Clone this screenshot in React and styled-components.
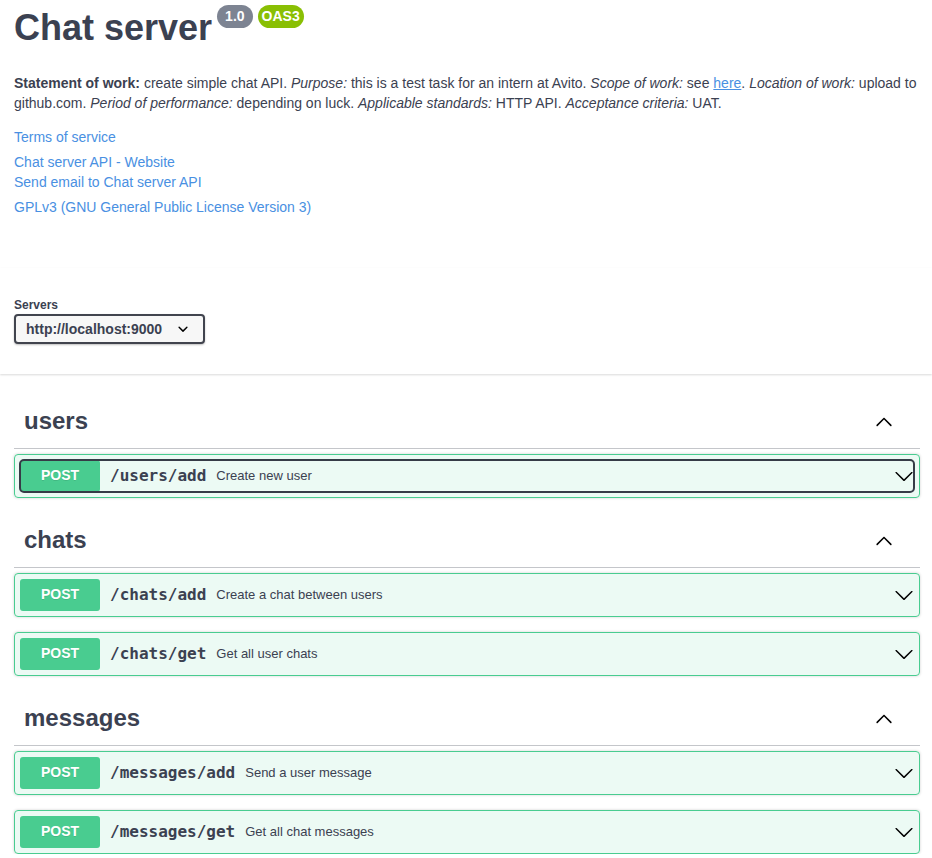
import React from 'react';
import styled, { createGlobalStyle } from 'styled-components';

const GlobalStyle = createGlobalStyle`
	html, body {
		margin: 0;
		padding: 0;
		background: #fff;
	}
	body {
		font-family: "Liberation Sans", Arial, sans-serif;
		color: #3b4151;
	}
`;

const Page = styled.div`
	display: flex;
	flex-direction: column;
`;

const Wrapper = styled.div`
	padding: 0 12px 0 14px;
`;

const Info = styled(Wrapper)`
	padding-top: 4px;
	margin-bottom: 51px;
`;

const TitleRow = styled.div`
	display: flex;
	align-items: flex-start;
	gap: 5px;
`;

const Title = styled.h2`
	margin: 3px 0 0;
	font-size: 36px;
	line-height: 41px;
	font-weight: 700;
	color: #3b4151;
`;

const Badge = styled.span`
	display: inline-block;
	margin-top: 1px;
	height: 23px;
	line-height: 23px;
	padding: 0 ${props => props.$pad}px;
	border-radius: 57px;
	background: ${props => props.$color};
	color: #fff;
	font-size: 14px;
	font-weight: 700;
`;

const Description = styled.p`
	margin: 25px 0 0;
	font-size: 14px;
	line-height: 20px;
	color: #3b4151;

	a {
		color: #4990e2;
		text-decoration: underline;
	}
`;

const LinkBlock = styled.div`
	margin-top: ${props => props.$top}px;
	font-size: 14px;
	line-height: 20px;
`;

const Link = styled.a`
	display: block;
	color: #4990e2;
	text-decoration: none;
`;

const SchemeContainer = styled.section`
	padding: 30px 0;
	background: #fff;
	box-shadow: 0 1px 2px 0 rgba(0, 0, 0, 0.15);
`;

const ServersLabel = styled.div`
	font-size: 12px;
	font-weight: 700;
	line-height: 14px;
	margin-bottom: 2px;
	color: #3b4151;
`;

const Select = styled.div`
	box-sizing: border-box;
	width: 191px;
	height: 30px;
	display: flex;
	align-items: center;
	justify-content: space-between;
	padding: 0 10px 0 10px;
	border: 2px solid #41444e;
	border-radius: 4px;
	background: #f7f7f7;
	box-shadow: 0 1px 2px 0 rgba(0, 0, 0, 0.25);
	font-size: 14px;
	font-weight: 700;
	color: #3b4151;
`;

const Tags = styled(Wrapper)`
	margin-top: 20px;
	display: flex;
	flex-direction: column;
	gap: 15px;
`;

const TagSection = styled.div`
	display: flex;
	flex-direction: column;
	gap: 15px;
`;

const TagHeader = styled.div`
	box-sizing: border-box;
	height: 55px;
	display: flex;
	align-items: center;
	justify-content: space-between;
	padding: 0 26px 0 10px;
	border-bottom: 1px solid rgba(59, 65, 81, 0.3);
	margin-bottom: -10px;

	h3 {
		margin: 0;
		font-size: 24px;
		font-weight: 700;
		color: #3b4151;
	}
`;

const Opblock = styled.div`
	border: 1px solid #49cc90;
	border-radius: 4px;
	background: rgba(73, 204, 144, 0.1);
	box-shadow: 0 0 3px rgba(0, 0, 0, 0.19);
	padding: 5px;
`;

const Summary = styled.div`
	display: flex;
	align-items: center;
	height: 32px;
	border-radius: 4px;
	outline: ${props => (props.$focused ? '2px solid #363b47' : 'none')};
	outline-offset: -1px;
`;

const Method = styled.span`
	min-width: 80px;
	height: 32px;
	line-height: 31px;
	text-align: center;
	border-radius: 3px;
	background: #49cc90;
	color: #fff;
	font-size: 14px;
	font-weight: 700;
	text-shadow: 0 1px 0 rgba(0, 0, 0, 0.1);
`;

const Path = styled.span`
	padding: 0 10px 2px;
	font-family: "DejaVu Sans Mono", monospace;
	font-size: 16px;
	font-weight: 700;
	color: #3b4151;
`;

const Summ = styled.span`
	flex: 1;
	padding-bottom: 2px;
	font-size: 13px;
	color: #3b4151;
`;

const ArrowUp = () => (
	<svg width="20" height="20" viewBox="0 0 20 20">
		<path
			fill="#000"
			d="M17.418 14.908c-.31.31-.813.31-1.124 0L10 8.59l-6.294 6.318c-.31.31-.813.31-1.124 0-.31-.31-.31-.813 0-1.124l6.862-6.89c.31-.31.813-.31 1.124 0l6.862 6.89c.31.31.31.813 0 1.124z"
		/>
	</svg>
);

const ArrowDown = () => (
	<svg width="20" height="20" viewBox="0 0 20 20">
		<path
			fill="#000"
			d="M17.418 6.109c.272-.268.709-.268.979 0s.271.701 0 .969l-7.908 7.83c-.27.268-.707.268-.979 0l-7.908-7.83c-.27-.268-.27-.701 0-.969.271-.268.709-.268.979 0L10 13.25l7.418-7.141z"
		/>
	</svg>
);

const SelectArrow = () => (
	<svg width="20" height="20" viewBox="0 0 20 20">
		<path
			fill="#000"
			d="M13.418 7.859a.695.695 0 01.978 0 .68.68 0 010 .969l-3.908 3.83a.697.697 0 01-.979 0l-3.908-3.83a.68.68 0 010-.969.695.695 0 01.978 0L10 11l3.418-3.141z"
		/>
	</svg>
);

const tags = [
	{
		name: 'users',
		ops: [{ path: '/users/add', summary: 'Create new user', focused: true }],
	},
	{
		name: 'chats',
		ops: [
			{ path: '/chats/add', summary: 'Create a chat between users' },
			{ path: '/chats/get', summary: 'Get all user chats' },
		],
	},
	{
		name: 'messages',
		ops: [
			{ path: '/messages/add', summary: 'Send a user message' },
			{ path: '/messages/get', summary: 'Get all chat messages' },
		],
	},
];

const App = () => (
	<Page>
		<GlobalStyle />
		<Info>
			<TitleRow>
				<Title>Chat server</Title>
				<Badge $color="#7d8492" $pad={8}>1.0</Badge>
				<Badge $color="#89bf04" $pad={4}>OAS3</Badge>
			</TitleRow>
			<Description>
				<b>Statement of work:</b> create simple chat API. <i>Purpose:</i> this is a test task
				for an intern at Avito. <i>Scope of work:</i> see <a href="#">here</a>.{' '}
				<i>Location of work:</i> upload to github.com. <i>Period of performance:</i> depending
				on luck. <i>Applicable standards:</i> HTTP API. <i>Acceptance criteria:</i> UAT.
			</Description>
			<LinkBlock $top={14}>
				<Link href="#">Terms of service</Link>
			</LinkBlock>
			<LinkBlock $top={5}>
				<Link href="#">Chat server API - Website</Link>
				<Link href="#">Send email to Chat server API</Link>
			</LinkBlock>
			<LinkBlock $top={5}>
				<Link href="#">GPLv3 (GNU General Public License Version 3)</Link>
			</LinkBlock>
		</Info>
		<SchemeContainer>
			<Wrapper>
				<ServersLabel>Servers</ServersLabel>
				<Select>
					<span>http://localhost:9000</span>
					<SelectArrow />
				</Select>
			</Wrapper>
		</SchemeContainer>
		<Tags>
			{tags.map(tag => (
				<TagSection key={tag.name}>
					<TagHeader>
						<h3>{tag.name}</h3>
						<ArrowUp />
					</TagHeader>
					{tag.ops.map(op => (
						<Opblock key={op.path}>
							<Summary $focused={op.focused}>
								<Method>POST</Method>
								<Path>{op.path}</Path>
								<Summ>{op.summary}</Summ>
								<ArrowDown />
							</Summary>
						</Opblock>
					))}
				</TagSection>
			))}
		</Tags>
	</Page>
);

export default App;
